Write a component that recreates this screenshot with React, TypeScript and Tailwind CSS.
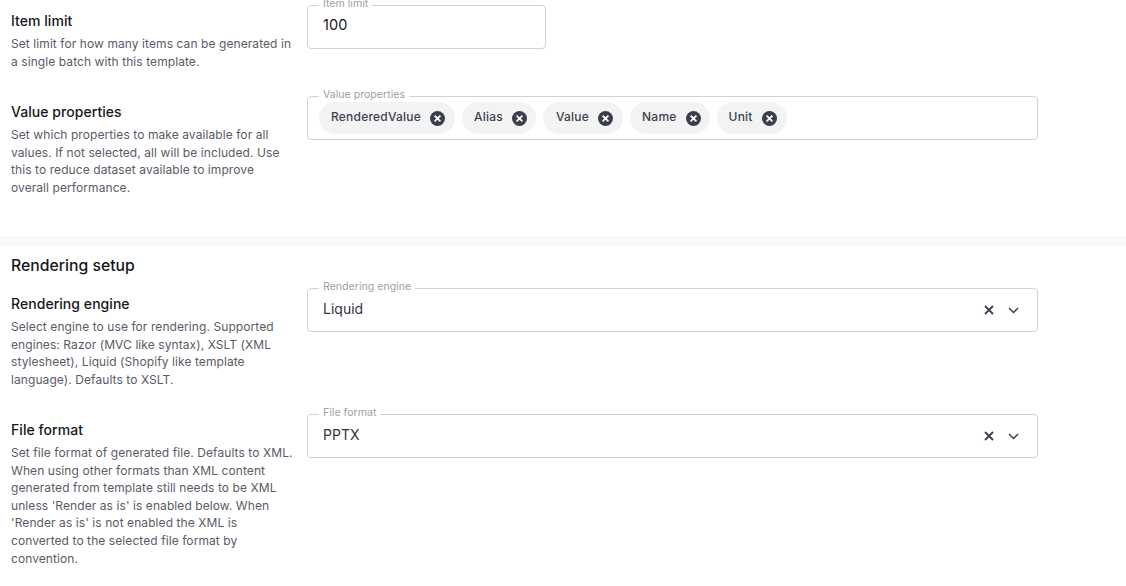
import React from "react";

const font = { fontFamily: "Inter, 'Noto Sans', sans-serif" };

function Intro({ title, children }: { title: string; children: React.ReactNode }) {
  return (
    <div className="w-[296px] shrink-0 pl-[11px] pt-[7px] pr-[2px]">
      <h3 className="text-[14px] leading-[18px] font-medium text-[#17171c] tracking-[0.05px]">{title}</h3>
      <p className="mt-[5px] text-[12px] leading-[17.6px] tracking-[0.08px] text-[#5b5b66]">{children}</p>
    </div>
  );
}

function Field({ label, width, children }: { label: string; width: string; children: React.ReactNode }) {
  return (
    <div className={`relative h-[44px] rounded-[4px] border border-[#d2d2d6] flex items-center ${width}`}>
      <span className="absolute -top-[9px] left-[11px] bg-white px-[4px] text-[10.6px] leading-[14px] text-[#a0a0a8]">{label}</span>
      {children}
    </div>
  );
}

function Chip({ label, pad }: { label: string; pad: string }) {
  return (
    <span className={`h-[32px] rounded-full bg-[#f3f3f4] flex items-center gap-[9px] ${pad}`}>
      <span className="-translate-y-[1px] text-[12px] font-medium tracking-[0.22px] text-[#3d4251]">{label}</span>
      <svg width="15" height="15" viewBox="0 0 15 15">
        <circle cx="7.5" cy="7.5" r="7.5" fill="#3a3f4e" />
        <path d="M4.6 4.6l5.8 5.8M10.4 4.6l-5.8 5.8" stroke="#fff" strokeWidth="1.8" />
      </svg>
    </span>
  );
}

function SelectField({ label, value }: { label: string; value: string }) {
  return (
    <Field label={label} width="w-[731px]">
      <span className="pl-[15px] flex-1 -translate-y-[2px] text-[14px] text-[#33343d]">{value}</span>
      <svg width="10" height="10" viewBox="0 0 10 10" className="mr-[14px]">
        <path d="M1 1l8 8M9 1l-8 8" stroke="#3a3f4e" strokeWidth="1.8" />
      </svg>
      <svg width="11" height="7" viewBox="0 0 11 7" className="mr-[18px]">
        <path d="M1 1l4.5 4.5L10 1" fill="none" stroke="#3a3f4e" strokeWidth="1.5" />
      </svg>
    </Field>
  );
}

export default function App() {
  return (
    <div style={font} className="h-[586px] w-[1126px] overflow-hidden bg-white pt-[5px]">
      <div className="flex h-[91px]">
        <Intro title="Item limit">
          Set limit for how many items can be generated in a single batch with this template.
        </Intro>
        <div className="pl-[11px]">
          <Field label="Item limit" width="w-[239px]">
            <span className="pl-[15px] -translate-y-[2px] text-[14.5px] tracking-[0.1px] text-[#17171c]">100</span>
          </Field>
        </div>
      </div>

      <div className="flex h-[140px]">
        <Intro title="Value properties">
          Set which properties to make available for all values. If not selected, all will be included. Use this to
          reduce dataset available to improve overall performance.
        </Intro>
        <div className="pl-[11px]">
          <Field label="Value properties" width="w-[731px]">
            <div className="flex gap-[7px] pl-[11px]">
              <Chip label="RenderedValue" pad="pl-[12px] pr-[10px]" />
              <Chip label="Alias" pad="pl-[12px] pr-[9px]" />
              <Chip label="Value" pad="pl-[13px] pr-[10px]" />
              <Chip label="Name" pad="pl-[12px] pr-[9px]" />
              <Chip label="Unit" pad="pl-[12px] pr-[10px]" />
            </div>
          </Field>
        </div>
      </div>

      <div className="h-[10px] bg-[#f9f9f9]" />

      <h2 className="pl-[11px] pt-[10px] text-[15.75px] leading-[20px] font-medium text-[#17171c]">Rendering setup</h2>

      <div className="mt-[12px] flex h-[126px]">
        <Intro title="Rendering engine">
          Select engine to use for rendering. Supported engines: Razor (MVC like syntax), XSLT (XML stylesheet), Liquid
          (Shopify like template language). Defaults to XSLT.
        </Intro>
        <div className="pl-[11px]">
          <SelectField label="Rendering engine" value="Liquid" />
        </div>
      </div>

      <div className="flex">
        <Intro title="File format">
          Set file format of generated file. Defaults to XML. When using other formats than XML content generated from
          template still needs to be XML unless 'Render as is' is enabled below. When 'Render as is' is not enabled the
          XML is converted to the selected file format by convention.
        </Intro>
        <div className="pl-[11px]">
          <SelectField label="File format" value="PPTX" />
        </div>
      </div>
    </div>
  );
}
